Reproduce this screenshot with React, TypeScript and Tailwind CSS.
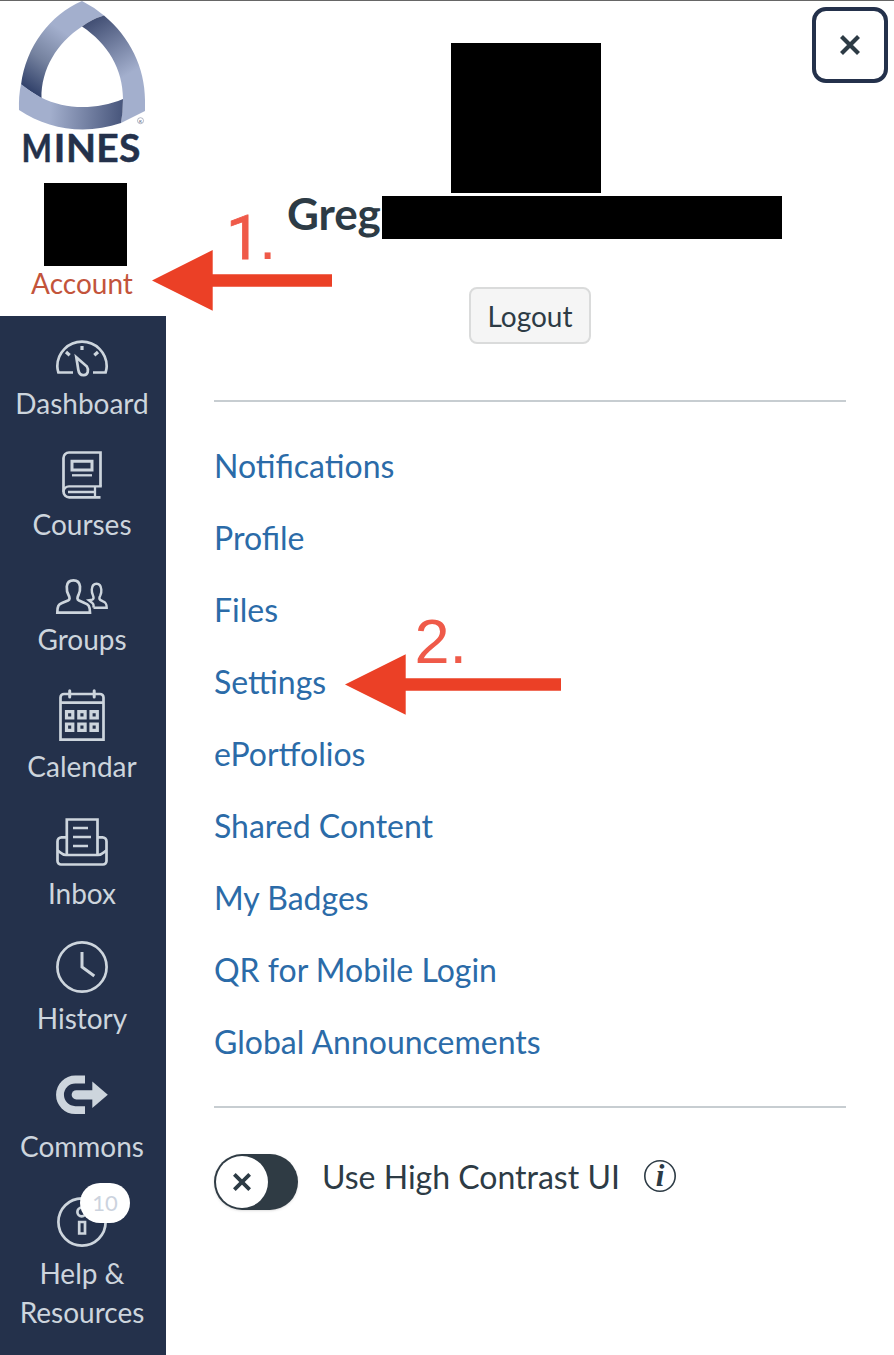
import React from "react";

type NavEntry = {
  label: string;
  height: string;
  viewBox: string;
  icon: React.ReactNode;
  badge?: string;
};

const navEntries: NavEntry[] = [
  {
    label: "Dashboard",
    height: "h-[107px]",
    viewBox: "54 328 56 56",
    icon: (
      <>
        <path d="M73 372.5H58.4C57.6 370 57.3 368.2 57.3 366.3A24.7 24.7 0 0 1 106.7 366.3C106.7 368.2 106.4 370 105.6 372.5H93" />
        <path strokeWidth="3.2" d="M82 346V350M66 352L69.700 355.300M98 352L94.300 355.300" />
        <path d="M76.300 357.300L86.700 366.300C89.300 370 87.800 375 83.800 375.200C80.500 375.300 78.700 372.800 78.300 369.800Z" />
      </>
    ),
  },
  {
    label: "Courses",
    height: "h-[121px]",
    viewBox: "54 449 56 56",
    icon: (
      <>
        <path d="M100.500 486.300V452.500H69A5.500 5.500 0 0 0 63.500 458V491.500A5.700 5.700 0 0 0 69.200 497.300H100.500" />
        <path d="M101.800 486.300H69A5.500 5.500 0 0 0 63.500 491.800M68 492H95M95 486.300V497" strokeWidth="2.300" />
        <path d="M72 461.300H92V470H72Z" strokeWidth="3" />
        <path d="M72 475.300H92" strokeWidth="2.300" />
      </>
    ),
  },
  {
    label: "Groups",
    height: "h-[115px]",
    viewBox: "54 564 56 56",
    icon: (
      <>
        <path d="M57.300 612.700H90C90 606 88.500 604.500 84.500 603L79 600.500C77 599.500 77 597.500 78.500 595C80 592 80.300 589.500 80 586.500C79.500 582 77 580.300 73.500 580.300C70 580.300 67.200 582 66.800 586.500C66.600 590 67 592.500 68.500 595C70 597.500 70 599.500 68 600.500L62 603C58.500 604.500 57.300 606 57.300 612.700Z" />
        <path strokeWidth="2.400" d="M93.500 607.700H106.700C106.700 603.500 105.700 602.300 103 601.300L100.200 599.900C99 598.800 99.400 597 100.300 595.500C101.300 593.500 101.500 591.500 101.300 589.500C101 586 99.500 583.700 96.600 583.700C93.500 583.700 92 586 91.800 589.500C91.600 592 92.100 593.500 93 595.500C93.800 597.300 93.700 599 92.300 599.700L88.800 600.300L92 602.800C93.500 603.600 93.900 605 93.500 607.700" />
      </>
    ),
  },
  {
    label: "Calendar",
    height: "h-[127px]",
    viewBox: "54 691 56 56",
    icon: (
      <>
        <path d="M60.500 739.700V697.500A3.500 3.500 0 0 1 64 694H100A3.500 3.500 0 0 1 103.500 697.500V739.700ZM60.500 702.700H103.500" />
        <path d="M69.700 690.800V697M94.200 690.800V697" strokeWidth="3" strokeLinecap="round" />
        <path
          strokeWidth="3.200"
          d="M66.500 711.700h6.300v6.300h-6.300ZM78.800 711.700h6.300v6.300h-6.300ZM91 711.700h6.300v6.300h-6.300ZM66.500 724h6.300v6.300h-6.300ZM78.800 724h6.300v6.300h-6.300ZM91 724h6.300v6.300h-6.300Z"
        />
      </>
    ),
  },
  {
    label: "Inbox",
    height: "h-[127px]",
    viewBox: "54 818 56 56",
    icon: (
      <>
        <path d="M66.800 855V819.500H97.500V855" />
        <path d="M73 828H88M73 837H91M73 846H88" />
        <path d="M66 837.400H61.500A4 4 0 0 0 57.500 841.400V861A3.500 3.500 0 0 0 61 864.500H103A3.500 3.500 0 0 0 106.500 861V841.400A4 4 0 0 0 102.500 837.400H98" />
        <path d="M57.500 850.500C60 851.500 61.500 855 66 855H98C102.500 855 104 851.500 106.500 850.500" />
      </>
    ),
  },
  {
    label: "History",
    height: "h-[125px]",
    viewBox: "54 943 56 56",
    icon: (
      <>
        <circle cx="82" cy="967" r="24.600" />
        <path d="M82 952V967L94.300 976" strokeWidth="3" />
      </>
    ),
  },
  {
    label: "Commons",
    height: "h-[128px]",
    viewBox: "54 1071 56 56",
    icon: (
      <>
        <path d="M85 1079.500H75.300A15.300 15.300 0 0 0 75.300 1110.100H85" strokeWidth="7.900" />
        <path d="M76.300 1094.800H93" strokeWidth="9.300" strokeLinecap="round" />
        <path d="M92.300 1081.500L107.800 1094.800L92.300 1108.100Z" fill="currentColor" stroke="none" />
      </>
    ),
  },
  {
    label: "Help & Resources",
    height: "h-[166px]",
    viewBox: "54 1198 56 56",
    badge: "10",
    icon: (
      <>
        <circle cx="82" cy="1222" r="23.600" />
        <circle cx="81.700" cy="1212" r="4.300" />
        <path d="M79.200 1222H85V1233.500H79.200Z" />
      </>
    ),
  },
];

const links = [
  "Notifications",
  "Profile",
  "Files",
  "Settings",
  "ePortfolios",
  "Shared Content",
  "My Badges",
  "QR for Mobile Login",
  "Global Announcements",
];

function NavItem({ entry }: { entry: NavEntry }) {
  return (
    <a className={`flex shrink-0 flex-col items-center justify-end ${entry.height}`}>
      <span className="relative block">
        <svg
          className="block h-14 w-14 overflow-visible"
          viewBox={entry.viewBox}
          fill="none"
          stroke="currentColor"
          strokeWidth="2.7"
        >
          {entry.icon}
        </svg>
        {entry.badge && (
          <span className="absolute -top-[15px] left-[26px] flex h-10 w-[50px] items-center justify-center rounded-full bg-white text-[22px] leading-none text-[#ccd3de]">
            {entry.badge}
          </span>
        )}
      </span>
      <span className="w-[140px] text-center text-[28px] leading-[39px]">{entry.label}</span>
    </a>
  );
}

function Logo() {
  return (
    <svg className="block h-[182px] w-[166px]" viewBox="0 1 166 182">
      <defs>
        <linearGradient id="left" x1="85" y1="10" x2="28" y2="92" gradientUnits="userSpaceOnUse">
          <stop offset="0.3" stopColor="#a3afcd" />
          <stop offset="0.65" stopColor="#75829f" />
          <stop offset="1" stopColor="#2d3d67" />
        </linearGradient>
        <linearGradient id="right" x1="92" y1="18" x2="130" y2="82" gradientUnits="userSpaceOnUse">
          <stop offset="0" stopColor="#3f4c71" />
          <stop offset="0.9" stopColor="#a3afcd" />
        </linearGradient>
        <linearGradient id="base" x1="50" y1="110" x2="124" y2="114" gradientUnits="userSpaceOnUse">
          <stop offset="0" stopColor="#a3afcd" />
          <stop offset="1" stopColor="#46547a" />
        </linearGradient>
      </defs>
      <path d="M82 1Q94 7 104 15.500Q92 19 82 26.500C57 43 41 69 41.500 98.500L21 85C26 46 50 15 82 1Z" fill="url(#left)" />
      <path d="M104 15.500C130 37 145 68 145 100V111L121 123Q123 111 123 99C123 69 108 44 82 26.500Q92 19 104 15.500Z" fill="url(#right)" />
      <path d="M21 84Q30.500 92 41 97.500C66 110 96 110 123 99Q123 112 121 123C86 135 49 130 19 110Q18.500 96 21 84Z" fill="url(#base)" />
      <circle cx="140.500" cy="120.700" r="3" fill="none" stroke="#7d879d" strokeWidth="0.6" />
      <text x="139" y="122.500" fontSize="4.500" fill="#56627e" className="font-['Lato',sans-serif]">R</text>
      <g
        fontSize="39"
        strokeWidth="0.5"
        className="fill-[#24314b] stroke-[#24314b] font-['Lato',sans-serif] font-bold"
      >
        <text x="21.6" y="162.300" textLength="30.5" lengthAdjust="spacingAndGlyphs">M</text>
        <text x="53.700 66 96.300 119" y="162.300">INES</text>
      </g>
    </svg>
  );
}

function Cross({ className }: { className: string }) {
  return (
    <svg className={className} viewBox="0 0 20 20" stroke="currentColor" strokeWidth="4.200">
      <path d="M1.500 1.500L18.500 18.500M18.500 1.500L1.500 18.500" />
    </svg>
  );
}

export default function App() {
  return (
    <div className="relative flex h-[1355px] w-[894px] overflow-hidden border-t border-[#666] bg-white font-['Lato',sans-serif] text-[#2d3b45]">
      <aside className="flex w-[166px] shrink-0 flex-col bg-[#24314b] text-[#cdd5dd]">
        <div className="flex h-[315px] flex-col bg-white">
          <Logo />
          <div className="ml-11 h-[83px] w-[83px] bg-black" />
          <span className="pr-0.5 text-center text-[28px] leading-[34px] text-[#c3543b]">Account</span>
        </div>
        <nav className="flex flex-col pr-0.5">
          {navEntries.map((entry) => (
            <NavItem key={entry.label} entry={entry} />
          ))}
        </nav>
      </aside>

      <main className="flex flex-1 flex-col px-12 pt-[42px]">
        <div className="ml-[237px] h-[150px] w-[150px] bg-black" />
        <div className="mt-[3px] flex items-start pl-[73px]">
          <h2 className="w-[95px] text-[44px] font-bold leading-[35px] tracking-[-0.1px]">Greg</h2>
          <div className="h-[43px] w-[400px] shrink-0 bg-black" />
        </div>
        <button className="mt-12 h-[57px] w-[122px] self-center rounded-lg border-2 border-[#dadbdb] bg-[#f5f5f5] pt-0.5 text-[28px] leading-[51px]">
          Logout
        </button>
        <hr className="mt-14 border-t-2 border-[#c7cdd1]" />
        <ul className="mt-7 flex flex-col text-[#2b6ba8]">
          {links.map((link) => (
            <li key={link} className="text-[32px] leading-[72px]">
              <a>{link}</a>
            </li>
          ))}
        </ul>
        <hr className="mt-7 border-t-2 border-[#c7cdd1]" />
        <div className="mt-[46px] flex items-start">
          <span className="flex h-14 w-[84px] items-center rounded-full bg-[#2f3b44] pl-0.5 shadow-sm">
            <span className="flex h-[52px] w-[52px] items-center justify-center rounded-full bg-white">
              <Cross className="h-[18px] w-[18px]" />
            </span>
          </span>
          <span className="ml-6 text-[32px] leading-[46px]">Use High Contrast UI</span>
          <svg className="ml-6 mt-1.5 h-8 w-8 overflow-visible" viewBox="0 0 32 32">
            <circle cx="16" cy="16" r="15.200" fill="none" stroke="currentColor" strokeWidth="1.600" />
            <text
              x="16"
              y="25.700"
              fontSize="31"
              textAnchor="middle"
              fill="currentColor"
              className="font-['Liberation_Serif',serif] font-bold italic"
            >
              i
            </text>
          </svg>
        </div>
      </main>

      <button className="absolute left-[812px] top-1.5 flex h-[76px] w-[76px] items-center justify-center rounded-[14px] border-4 border-[#24314b] bg-white">
        <Cross className="h-5 w-5" />
      </button>

      <svg className="pointer-events-none absolute left-[152px] top-[190px] h-[140px] w-[200px] overflow-visible fill-[#eb4026]" viewBox="152 191 200 140">
        <path d="M152 280.500L212.700 250V274.300H332V286.700H212.700V310.700Z" />
        <text x="226" y="258.700" fontSize="62" strokeWidth="0.8" className="fill-[#ef5a49] stroke-[#ef5a49] font-['Roboto',sans-serif]">1</text>
        <text x="259" y="258.700" fontSize="62" className="fill-[#ef5a49] font-['Liberation_Sans',sans-serif]">.</text>
      </svg>
      <svg className="pointer-events-none absolute left-[345px] top-[590px] h-[140px] w-[230px] overflow-visible fill-[#eb4026]" viewBox="345 591 230 140">
        <path d="M345 684.500L405.700 654.300V678.300H561V690.700H405.700V714.700Z" />
        <text x="414.5" y="663" fontSize="63" className="fill-[#ef5a49] font-['Liberation_Sans',sans-serif]">2.</text>
      </svg>
    </div>
  );
}
